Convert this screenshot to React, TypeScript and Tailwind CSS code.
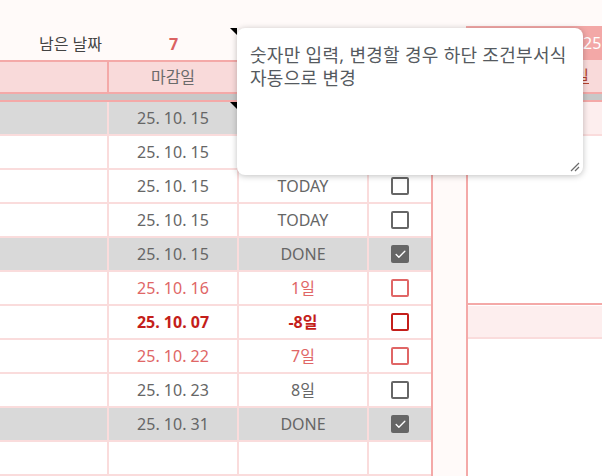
import { Check } from 'lucide-react';

type Row = {
  date: string;
  status: string;
  tone: 'gray' | 'red' | 'dark' | 'done';
  checked: boolean;
  note?: boolean;
};

const rows: Row[] = [
  { date: '25. 10. 15', status: 'DONE', tone: 'done', checked: true, note: true },
  { date: '25. 10. 15', status: 'TODAY', tone: 'gray', checked: false },
  { date: '25. 10. 15', status: 'TODAY', tone: 'gray', checked: false },
  { date: '25. 10. 15', status: 'TODAY', tone: 'gray', checked: false },
  { date: '25. 10. 15', status: 'DONE', tone: 'done', checked: true },
  { date: '25. 10. 16', status: '1일', tone: 'red', checked: false },
  { date: '25. 10. 07', status: '-8일', tone: 'dark', checked: false },
  { date: '25. 10. 22', status: '7일', tone: 'red', checked: false },
  { date: '25. 10. 23', status: '8일', tone: 'gray', checked: false },
  { date: '25. 10. 31', status: 'DONE', tone: 'done', checked: true },
];

const toneText = {
  gray: 'text-[#666666]',
  done: 'text-[#666666]',
  red: 'text-[#e06666]',
  dark: 'text-[#c41e1a] font-bold',
};

const toneBox = {
  gray: 'border-[#666666]',
  done: 'border-[#666666]',
  red: 'border-[#e06666]',
  dark: 'border-[#c41e1a]',
};

function NoteMark() {
  return (
    <span className="absolute top-0 right-0 w-0 h-0 border-l-[7px] border-l-transparent border-t-[7px] border-t-black" />
  );
}

function Checkbox({ checked, tone }: { checked: boolean; tone: Row['tone'] }) {
  if (checked) {
    return (
      <span className="flex items-center justify-center w-[18px] h-[18px] rounded-[2px] bg-[#666666]">
        <Check className="w-[13px] h-[13px] text-white" strokeWidth={2.5} />
      </span>
    );
  }
  return <span className={`w-[18px] h-[18px] rounded-[2px] border-2 ${toneBox[tone]}`} />;
}

function DataRow({ row }: { row?: Row }) {
  const bg = row?.tone === 'done' ? 'bg-[#d9d9d9]' : 'bg-white';
  const text = row ? toneText[row.tone] : '';
  return (
    <div className={`flex h-[34px] border-b-2 border-[#fadcdc] ${bg}`}>
      <div className="w-[107px]" />
      <div className={`relative flex items-center justify-center w-[130px] border-l-2 border-[#fadcdc] ${text}`}>
        {row?.date}
        {row?.note && <NoteMark />}
      </div>
      <div className={`flex items-center justify-center w-[130px] border-l-2 border-[#fadcdc] ${text}`}>
        {row?.status}
      </div>
      <div className="flex items-center justify-center w-[64px] border-l-2 border-[#fadcdc]">
        {row && <Checkbox checked={row.checked} tone={row.tone} />}
      </div>
    </div>
  );
}

export default function App() {
  return (
    <div className="relative w-[602px] h-[476px] overflow-hidden bg-[#fffaf9] font-['Noto_Sans','Noto_Sans_CJK_KR',sans-serif] text-[16px]">
      <div className="flex">
        {/* deadline table */}
        <div className="w-[433px] shrink-0 pt-[28px]">
          <div className="flex h-[32px]">
            <div className="flex items-center justify-end w-[107px] pr-[5px] text-[#434343]">남은 날짜</div>
            <div className="relative flex items-center justify-center w-[130px] pl-[3px] font-bold text-[#db6262]">
              7
              <NoteMark />
            </div>
          </div>
          <div className="border-r-2 border-[#f4a9a8]">
            <div className="flex h-[34px] border-y-2 border-[#f4a9a8] bg-[#f9dada] text-[#6b6b6b]">
              <div className="w-[107px]" />
              <div className="flex items-center justify-center w-[130px] border-l-2 border-[#f4a9a8]">마감일</div>
              <div className="w-[130px] border-l-2 border-[#f4a9a8]" />
              <div className="w-[64px] border-l-2 border-[#f4a9a8]" />
            </div>
            <div className="h-[6px] bg-[#c8c8c8]" />
            <div className="h-[2px] bg-[#f4a9a8]" />
            {rows.map((r, i) => (
              <DataRow key={i} row={r} />
            ))}
            <DataRow />
          </div>
        </div>

        <div className="w-[33px] shrink-0" />

        {/* side panel */}
        <div className="flex-1 min-w-0 pt-[26px]">
          <div className="h-[450px] border-l-2 border-[#f4a9a8] bg-white">
            <div className="flex items-center h-[34px] pl-[115px] bg-[#f3a8a7] text-white whitespace-nowrap">
              25
            </div>
            <div className="flex items-center justify-end h-[34px] pr-[13px] border-b-2 border-[#f4a9a8] bg-[#f9dada] text-[#b5432f] underline">
              일
            </div>
            <div className="h-[6px] bg-[#c8c8c8]" />
            <div className="h-[2px] bg-[#f4a9a8]" />
            <div className="h-[34px] border-b-2 border-[#fadcdc] bg-[#fdeeee]" />
            <div className="h-[167px]" />
            <div className="h-[2px] bg-[#f4a9a8]" />
            <div className="h-[34px] border-t border-white border-b-2 border-b-[#fadcdc] bg-[#fdeeee]" />
          </div>
        </div>
      </div>

      {/* comment popup */}
      <div className="absolute left-[237px] top-[28px] w-[346px] h-[147px] rounded-lg bg-white shadow-[0_1px_6px_rgba(0,0,0,0.25)] pl-[13px] pt-[16px] pr-[4px] text-[18px] leading-[23px] tracking-[0.3px] text-[#555a60] break-keep">
        숫자만 입력, 변경할 경우 하단 조건부서식 자동으로 변경
        <svg className="absolute right-[3px] bottom-[3px]" width="12" height="12" viewBox="0 0 12 12">
          <path d="M11 3 L3 11 M11 7 L7 11" stroke="#6b6b6b" strokeWidth="1.2" fill="none" />
        </svg>
      </div>
    </div>
  );
}
